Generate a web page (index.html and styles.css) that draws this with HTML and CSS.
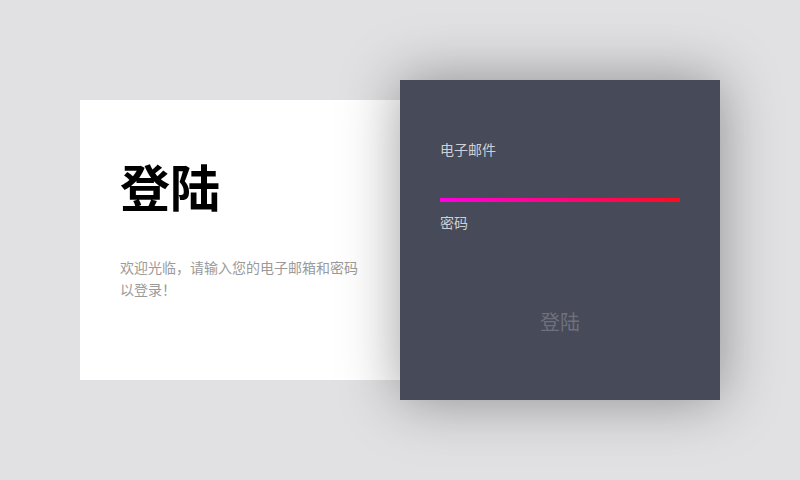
FILE: index.html
```html
<!DOCTYPE html>
<html lang="zh-CN">
<head>
<meta charset="utf-8">
<title>登陆</title>
<link rel="stylesheet" href="styles.css">
</head>
<body>
<main class="stage">
  <section class="intro">
    <h1 class="intro-title">登陆</h1>
    <p class="intro-text">欢迎光临，请输入您的电子邮箱和密码以登录！</p>
  </section>
  <form class="panel">
    <label class="field-label" for="email">电子邮件</label>
    <input class="field-input field-input--active" id="email" type="email">
    <label class="field-label field-label--second" for="pwd">密码</label>
    <input class="field-input" id="pwd" type="password">
    <button class="submit" type="button">登陆</button>
  </form>
</main>
</body>
</html>
```
FILE: styles.css
```css
* { box-sizing: border-box; }
html, body { margin: 0; height: 100%; }
body {
  background: #e1e1e3;
  font-family: "Noto Sans CJK SC", "Noto Sans", sans-serif;
}
.stage {
  height: 100vh;
  display: flex;
  align-items: center;
  justify-content: center;
}
.intro {
  width: 320px;
  height: 280px;
  background: #fff;
  padding: 40px;
}
.intro-title {
  margin: 20px 0 0;
  font-size: 50px;
  line-height: 50px;
  font-weight: 700;
  color: #000;
}
.intro-text {
  margin: 46px 0 0;
  font-size: 14px;
  line-height: 22px;
  color: #9a9a9a;
}
.panel {
  position: relative;
  width: 320px;
  height: 320px;
  background: #474a59;
  padding: 59px 40px 0;
  display: flex;
  flex-direction: column;
  box-shadow: 0 0 55px rgba(0, 0, 0, 0.38);
}
.field-label {
  font-size: 14px;
  line-height: 20px;
  color: #cfd0d6;
}
.field-label--second { margin-top: 10px; }
.field-input {
  height: 43px;
  width: 100%;
  background: transparent;
  border: none;
  border-bottom: 4px solid transparent;
  outline: none;
  padding: 0;
  color: #fff;
}
.field-input--active {
  border-image: linear-gradient(90deg, #ff00e0, #ff0a1e) 1;
}
.submit {
  margin-top: 33px;
  align-self: center;
  background: none;
  border: none;
  padding: 0;
  font-family: inherit;
  font-size: 20px;
  line-height: 28px;
  color: #6f717b;
}
```
